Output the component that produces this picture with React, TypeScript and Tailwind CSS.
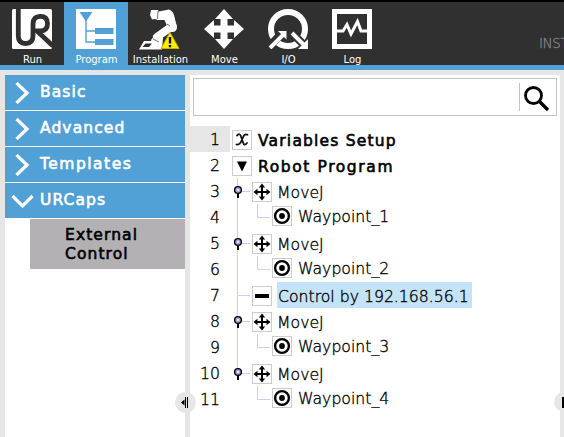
import type { ReactNode } from "react";

const STRONG = "font-['DejaVu_Sans',sans-serif] text-[15.5px] [-webkit-text-stroke:0.6px_currentColor]";
const LIGHT = "font-['DejaVu_Sans',sans-serif] text-[15.7px] font-extralight [-webkit-text-stroke:0.35px_currentColor]";

function RunIcon() {
  return (
    <svg width="40" height="40" viewBox="0 0 40 40">
      <rect width="40" height="40" rx="1.5" fill="#fff" />
      <path
        d="M6.300 0V27Q6.300 34.500 13.600 34.500Q21 34.500 21 27V15Q21 7.300 28.500 7.300Q35.500 7.300 35.500 14.500Q35.500 22 28.500 22H25L41 37"
        fill="none"
        stroke="#303030"
        strokeWidth="4.800"
      />
    </svg>
  );
}

function ProgramIcon() {
  return (
    <svg width="40" height="40" viewBox="0 0 40 40">
      <rect width="40" height="40" fill="#fff" />
      <path d="M3.500 3H16.500L10 12.500Z" fill="#52a1d6" />
      <path d="M10 10V33H20M10 22H20" fill="none" stroke="#52a1d6" strokeWidth="1.400" />
      <path d="M19 19H37.500V25H19ZM19 30H37.500V36H19Z" fill="#52a1d6" />
    </svg>
  );
}

function InstallationIcon() {
  return (
    <svg width="44" height="42" viewBox="0 0 44 42">
      <path d="M6 32H20L24 40.500H1Z" fill="#fff" />
      <path d="M7.500 34.500H14L11 38H4.500Z" fill="#303030" />
      <path d="M13 31L18 25L25 29L24 40H15Z" fill="#fff" />
      <path d="M19 28L33 18" stroke="#fff" strokeWidth="8" strokeLinecap="round" />
      <path d="M18 3L31 0.500Q35 2 36 6L39 18L30 19L26.500 11L19 11Z" fill="#fff" />
      <circle cx="34.500" cy="18.500" r="4.500" fill="#fff" />
      <path d="M13 1H20L22 9L20 11L17 10L14 10.500L12 6Z" fill="#fff" />
      <path d="M20 2L19.500 10M29 15L32 17M15 30L21 33" stroke="#303030" strokeWidth=".7" />
      <path d="M32 23.500L41 39.500H23Z" fill="#ffee00" stroke="#c9b000" strokeWidth="1" strokeLinejoin="round" />
      <path d="M32 28V34.500M32 36V38.300" stroke="#111" strokeWidth="2.400" />
    </svg>
  );
}

function MoveIcon() {
  return (
    <svg width="40" height="40" viewBox="0 0 40 40">
      <path
        d="M20 0L29 10H23.500V16.500H30V11L40 20L30 29V23.500H23.500V30H29L20 40L11 30H16.500V23.500H10V29L0 20L10 11V16.500H16.500V10H11Z"
        fill="#fff"
      />
    </svg>
  );
}

function IoIcon() {
  return (
    <svg width="40" height="40" viewBox="0 0 40 40">
      <circle cx="20" cy="20" r="17" fill="none" stroke="#fff" strokeWidth="6" />
      <path d="M-1 40L14 24M23 23L40 40" stroke="#303030" strokeWidth="8" />
      <path d="M10 22H18.500V30.500ZM40 30V40H30Z" fill="#fff" />
      <path d="M2 39L16 25M24 24L37 37" stroke="#fff" strokeWidth="4" />
    </svg>
  );
}

function LogIcon() {
  return (
    <svg width="40" height="40" viewBox="0 0 40 40">
      <rect x="2.500" y="2.500" width="35" height="35" fill="#303030" stroke="#fff" strokeWidth="5" />
      <path d="M3 22H11L15 15.500L19 25L25.500 12.500L29 22H37" fill="none" stroke="#fff" strokeWidth="3" />
    </svg>
  );
}

const tools: { label: string; icon: ReactNode; active?: boolean }[] = [
  { label: "Run", icon: <RunIcon /> },
  { label: "Program", icon: <ProgramIcon />, active: true },
  { label: "Installation", icon: <InstallationIcon /> },
  { label: "Move", icon: <MoveIcon /> },
  { label: "I/O", icon: <IoIcon /> },
  { label: "Log", icon: <LogIcon /> },
];

function Toolbar() {
  return (
    <header className="flex h-[70px] shrink-0 border-t-2 border-b-[5px] border-t-black border-b-[#52a1d6] bg-[#303030]">
      {tools.map((t) => (
        <div
          key={t.label}
          className={`flex w-16 shrink-0 flex-col items-center pt-[7px] ${t.active ? "bg-[#52a1d6]" : ""}`}
        >
          <div className="flex h-10 justify-center">{t.icon}</div>
          <span className="mt-[5px] pl-px font-['DejaVu_Sans',sans-serif] text-[10px] leading-[12px] whitespace-nowrap text-white">
            {t.label}
          </span>
        </div>
      ))}
      <span className="ml-[155px] pt-[31px] font-['DejaVu_Sans',sans-serif] text-[13.5px] leading-[20px] font-extralight tracking-[-0.4px] text-[#858585] [-webkit-text-stroke:0.3px_currentColor]">
        INST
      </span>
    </header>
  );
}

function Chevron({ open }: { open?: boolean }) {
  return (
    <svg width="25" height="24" viewBox="0 0 25 24" className="shrink-0">
      <path
        d={open ? "M2.500 7L12.500 17L22.500 7" : "M6.500 2L17 12L6.500 22"}
        fill="none"
        stroke="#fff"
        strokeWidth="3.200"
      />
    </svg>
  );
}

function Sidebar() {
  return (
    <nav className={`ml-[5px] w-[180px] shrink-0 bg-white tracking-[1.1px] ${STRONG}`}>
      {["Basic", "Advanced", "Templates", "URCaps"].map((name) => (
        <div key={name} className="mb-px flex h-[35px] items-center gap-[5px] bg-[#52a1d6] pl-[5px] text-white">
          <Chevron open={name === "URCaps"} />
          <span className={`-mt-px leading-5 ${name === "Templates" ? "tracking-[1.5px]" : ""}`}>{name}</span>
        </div>
      ))}
      <div className="ml-[25px] h-[50px] bg-[#b3b1b4] pt-[7px] pl-[35px] leading-[19px] text-black">
        External
        <br />
        Control
      </div>
    </nav>
  );
}

type Kind = "vars" | "program" | "move" | "waypoint" | "control";

function NodeIcon({ kind }: { kind: Kind }) {
  return (
    <svg width="20" height="20" viewBox="0 0 20 20" className="shrink-0">
      <rect x=".5" y=".5" width="19" height="19" fill="#fff" stroke="#ccc" />
      {kind === "vars" && (
        <path
          d="M5 5.500Q8 2.500 9 6.500L11 12.500Q12 16.500 15 13M15.500 4.800Q12.500 3 10.500 8.500Q8 15.500 4.500 14.500"
          fill="none"
          stroke="#111"
          strokeWidth="1.800"
          strokeLinecap="round"
        />
      )}
      {kind === "program" && <path d="M5 5.500H15L10 15.500Z" fill="#000" />}
      {kind === "move" && (
        <path
          d="M10 1.500L13.200 5.500H11V9H14.500V6.800L18.500 10L14.500 13.200V11H11V14.500H13.200L10 18.500L6.800 14.500H9V11H5.500V13.200L1.500 10L5.500 6.800V9H9V5.500H6.800Z"
          fill="#000"
        />
      )}
      {kind === "waypoint" && (
        <>
          <circle cx="10" cy="10" r="6.900" fill="none" stroke="#000" strokeWidth="2.400" />
          <circle cx="10" cy="10" r="2.900" fill="#000" />
        </>
      )}
      {kind === "control" && <rect x="3" y="8" width="14" height="4" rx=".5" fill="#000" />}
    </svg>
  );
}

function Connector({ kind, last }: { kind: Kind; last: boolean }) {
  const w = kind === "waypoint" ? 42 : 22;
  return (
    <svg width={w} height="26" viewBox={`0 0 ${w} 26`} className="shrink-0">
      {!(last && kind === "waypoint") && (
        <path d={last ? "M7.500 0V13" : "M7.500 0V26"} stroke="#ccccff" fill="none" />
      )}
      {kind === "waypoint" && <path d="M27.500 0V13.500H40" stroke="#ccccff" fill="none" />}
      {kind === "control" && <path d="M8 13.500H20" stroke="#ccccff" />}
      {kind === "move" && (
        <>
          <path d="M12 13.500H20" stroke="#ccccff" />
          <path d="M8 15V20" stroke="#000" strokeWidth="2" />
          <circle cx="8" cy="12" r="3.400" fill="#a3a3e0" stroke="#000" strokeWidth="1.400" />
          <circle cx="8" cy="12" r="1" fill="#fff" />
        </>
      )}
    </svg>
  );
}

const rows: { kind: Kind; label: string }[] = [
  { kind: "vars", label: "Variables Setup" },
  { kind: "program", label: "Robot Program" },
  { kind: "move", label: "MoveJ" },
  { kind: "waypoint", label: "Waypoint_1" },
  { kind: "move", label: "MoveJ" },
  { kind: "waypoint", label: "Waypoint_2" },
  { kind: "control", label: "Control by 192.168.56.1" },
  { kind: "move", label: "MoveJ" },
  { kind: "waypoint", label: "Waypoint_3" },
  { kind: "move", label: "MoveJ" },
  { kind: "waypoint", label: "Waypoint_4" },
];

const labelStyle: Record<Kind, string> = {
  vars: `ml-[5px] pl-px pt-[3px] tracking-[1.2px] ${STRONG}`,
  program: `ml-[5px] pl-px pt-[3px] tracking-[1.6px] ${STRONG}`,
  move: `ml-[5px] pt-[3px] ${LIGHT}`,
  control: `ml-[5px] w-[195px] pt-[3px] pl-px bg-[#c5e3f6] ${LIGHT}`,
  waypoint: `ml-[6px] -mt-[2px] pt-[3px] ${LIGHT}`,
};

function ProgramTree() {
  return (
    <div className="mt-[10px] text-black">
      {rows.map((r, i) => (
        <div key={i} className="flex h-[26px]">
          <div className={`w-10 shrink-0 pt-px pr-[10px] text-right leading-[26px] ${LIGHT} ${i === 0 ? "bg-[#e6e6e6]" : ""}`}>
            {i + 1}
          </div>
          {i < 2 ? <div className="w-[2px] shrink-0" /> : <Connector kind={r.kind} last={i >= 9} />}
          <div className={r.kind === "waypoint" ? "pt-[2px]" : "pt-1"}>
            <NodeIcon kind={r.kind} />
          </div>
          <span className={`leading-[24px] whitespace-nowrap ${labelStyle[r.kind]}`}>{r.label}</span>
        </div>
      ))}
    </div>
  );
}

export default function App() {
  return (
    <div className="flex h-[437px] w-[564px] flex-col overflow-hidden bg-[#e6e6e6]">
      <Toolbar />
      <div className="flex grow pt-[5px]">
        <Sidebar />
        <div className="relative w-[5px] shrink-0">
          <div className="absolute top-[317px] -left-[10px] z-10 size-[21px] rounded-full bg-[#e6e6e6]">
            <svg width="21" height="21" viewBox="0 0 21 21">
              <path d="M6 10.500L9.500 7.500V13.500Z" fill="#000" />
              <path d="M10.500 5V16M12.500 5V16" stroke="#000" />
            </svg>
          </div>
        </div>
        <main className="relative w-[370px] shrink-0 bg-white pt-[3px]">
          <div className="ml-[3px] flex h-[38px] w-[364px] items-center justify-end border border-[#c3c3c3]">
            <div className="h-7 w-px bg-[#c3c3c3]" />
            <svg width="36" height="36" viewBox="0 0 36 36">
              <circle cx="13.500" cy="16.500" r="8" fill="none" stroke="#000" strokeWidth="2.800" />
              <path d="M19 22L28 31" stroke="#000" strokeWidth="3.400" />
            </svg>
          </div>
          <ProgramTree />
          <div className="absolute top-[317px] -right-[14px] size-[20px] rounded-full bg-[#e6e6e6]">
            <div className="mt-[5px] ml-[8px] h-[11px] w-1 bg-black" />
          </div>
        </main>
      </div>
    </div>
  );
}
